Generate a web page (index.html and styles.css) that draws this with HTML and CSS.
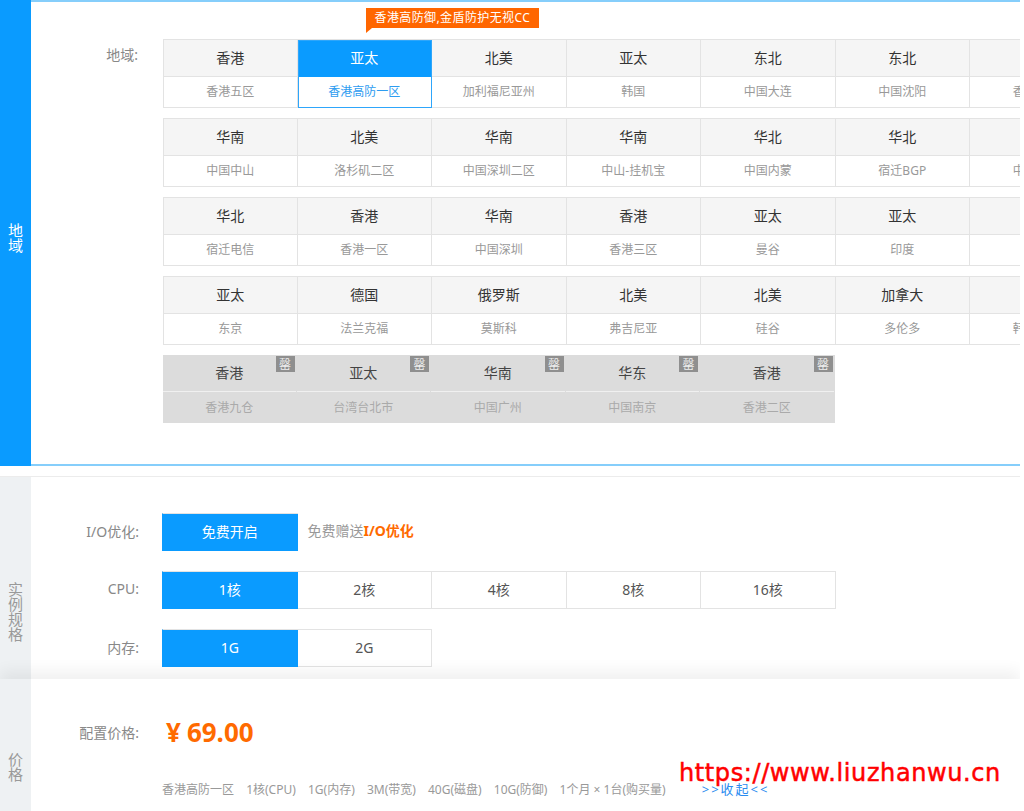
FILE: index.html
```html
<!DOCTYPE html>
<html lang="zh-CN">
  <head>
    <meta charset="UTF-8" />
    <meta name="viewport" content="width=device-width, initial-scale=1.0" />
    <title>云服务器购买</title>
    <link rel="stylesheet" href="styles.css">
  </head>

  <body>
    <div class="page">
      <!-- 地域 -->
      <section class="block region">
        <div class="side"><span>地域</span></div>
        <div class="main">
          <div class="field">
            <div class="lbl">地域:</div>
            <div class="groups">
              <div class="grp">
                <div class="cell"><div class="hd">香港</div><div class="bd">香港五区</div></div>
                <div class="cell on">
                  <div class="hd">亚太</div><div class="bd">香港高防一区</div>
                  <div class="tip">香港高防御,金盾防护无视CC</div>
                </div>
                <div class="cell"><div class="hd">北美</div><div class="bd">加利福尼亚州</div></div>
                <div class="cell"><div class="hd">亚太</div><div class="bd">韩国</div></div>
                <div class="cell"><div class="hd">东北</div><div class="bd">中国大连</div></div>
                <div class="cell"><div class="hd">东北</div><div class="bd">中国沈阳</div></div>
                <div class="cell"><div class="hd">香港</div><div class="bd">香港四区</div></div>
              </div>
              <div class="grp">
                <div class="cell"><div class="hd">华南</div><div class="bd">中国中山</div></div>
                <div class="cell"><div class="hd">北美</div><div class="bd">洛杉矶二区</div></div>
                <div class="cell"><div class="hd">华南</div><div class="bd">中国深圳二区</div></div>
                <div class="cell"><div class="hd">华南</div><div class="bd">中山-挂机宝</div></div>
                <div class="cell"><div class="hd">华北</div><div class="bd">中国内蒙</div></div>
                <div class="cell"><div class="hd">华北</div><div class="bd">宿迁BGP</div></div>
                <div class="cell"><div class="hd">华南</div><div class="bd">中国广州</div></div>
              </div>
              <div class="grp">
                <div class="cell"><div class="hd">华北</div><div class="bd">宿迁电信</div></div>
                <div class="cell"><div class="hd">香港</div><div class="bd">香港一区</div></div>
                <div class="cell"><div class="hd">华南</div><div class="bd">中国深圳</div></div>
                <div class="cell"><div class="hd">香港</div><div class="bd">香港三区</div></div>
                <div class="cell"><div class="hd">亚太</div><div class="bd">曼谷</div></div>
                <div class="cell"><div class="hd">亚太</div><div class="bd">印度</div></div>
                <div class="cell"><div class="hd">亚太</div><div class="bd">首尔</div></div>
              </div>
              <div class="grp">
                <div class="cell"><div class="hd">亚太</div><div class="bd">东京</div></div>
                <div class="cell"><div class="hd">德国</div><div class="bd">法兰克福</div></div>
                <div class="cell"><div class="hd">俄罗斯</div><div class="bd">莫斯科</div></div>
                <div class="cell"><div class="hd">北美</div><div class="bd">弗吉尼亚</div></div>
                <div class="cell"><div class="hd">北美</div><div class="bd">硅谷</div></div>
                <div class="cell"><div class="hd">加拿大</div><div class="bd">多伦多</div></div>
                <div class="cell"><div class="hd">亚太</div><div class="bd">韩国二区</div></div>
              </div>
              <div class="grp off">
                <div class="cell"><div class="hd">香港</div><div class="bd">香港九仓</div><i class="sold">罄</i></div>
                <div class="cell"><div class="hd">亚太</div><div class="bd">台湾台北市</div><i class="sold">罄</i></div>
                <div class="cell"><div class="hd">华南</div><div class="bd">中国广州</div><i class="sold">罄</i></div>
                <div class="cell"><div class="hd">华东</div><div class="bd">中国南京</div><i class="sold">罄</i></div>
                <div class="cell"><div class="hd">香港</div><div class="bd">香港二区</div><i class="sold">罄</i></div>
              </div>
            </div>
          </div>
        </div>
      </section>

      <!-- 实例规格 -->
      <section class="block spec">
        <div class="side grey"><span>实例规格</span></div>
        <div class="main">
          <div class="field mid">
            <div class="lbl">I/O优化:</div>
            <div class="opts"><div class="opt on">免费开启</div></div>
            <div class="note">免费赠送<b>I/O优化</b></div>
          </div>
          <div class="field mid">
            <div class="lbl">CPU:</div>
            <div class="opts">
              <div class="opt on">1核</div>
              <div class="opt">2核</div>
              <div class="opt">4核</div>
              <div class="opt">8核</div>
              <div class="opt">16核</div>
            </div>
          </div>
          <div class="field mid">
            <div class="lbl">内存:</div>
            <div class="opts">
              <div class="opt on">1G</div>
              <div class="opt">2G</div>
            </div>
          </div>
        </div>
      </section>

      <!-- 价格 -->
      <section class="block price">
        <div class="side grey"><span>价格</span></div>
        <div class="main">
          <div class="field mid">
            <div class="lbl">配置价格:</div>
            <div class="amount"><span class="yen">¥</span>69.00</div>
          </div>
          <div class="summary">
            <span>香港高防一区</span>
            <span>1核(CPU)</span>
            <span>1G(内存)</span>
            <span>3M(带宽)</span>
            <span>40G(磁盘)</span>
            <span>10G(防御)</span>
            <span>1个月 × 1台(购买量)</span>
            <a class="fold">&gt;&gt;收起&lt;&lt;</a>
          </div>
        </div>
        <div class="mark">https://www.liuzhanwu.cn</div>
      </section>
    </div>
  </body>
</html>
```

FILE: styles.css
```css
html,
body {
  padding: 0;
  margin: 0;
  background: #fff;
}
body {
  font-family: "Noto Sans", "Noto Sans CJK SC", sans-serif;
  color: #333;
  overflow: hidden;
}
.page {
  width: 1020px;
  height: 811px;
  overflow: hidden;
}
.block {
  display: flex;
  position: relative;
}
.side {
  width: 31px;
  flex: none;
  background: #0a9bff;
  color: #fff;
  span {
    display: block;
    width: 15px;
    margin: 0 auto;
    font-family: "Noto Sans CJK SC", sans-serif;
    font-size: 15px;
    line-height: 15px;
  }
}
.side.grey {
  background: #eef1f3;
  color: #999;
}
.main {
  flex: 1;
  min-width: 0;
}
.field {
  display: flex;
  align-items: flex-start;
}
.field.mid {
  align-items: center;
}
.lbl {
  width: 108px;
  margin-right: 23px;
  text-align: right;
  font-size: 14px;
  color: #888;
  flex: none;
}

/* 地域 */
.region {
  height: 466px;
  .side span {
    padding-top: 222px;
  }
  .main {
    box-sizing: border-box;
    border-top: 2px solid #86cefb;
    border-bottom: 2px solid #86cefb;
    padding-top: 37px;
  }
  .lbl {
    padding-top: 6px;
    line-height: 20px;
    width: 107px;
    margin-right: 25px;
  }
}
.groups {
  display: flex;
  flex-direction: column;
  gap: 10px;
}
.grp {
  display: grid;
  grid-template-columns: 133.5px repeat(6, 134.5px);
  width: max-content;
  border-top: 1px solid #e3e3e3;
  border-left: 1px solid #e3e3e3;
}
.cell {
  position: relative;
  box-sizing: border-box;
  border-right: 1px solid #e3e3e3;
  border-bottom: 1px solid #e3e3e3;
  text-align: center;
  white-space: nowrap;
  .hd {
    height: 36px;
    line-height: 36px;
    background: #f5f5f5;
    border-bottom: 1px solid #e3e3e3;
    font-size: 14px;
    color: #333;
  }
  .bd {
    height: 30px;
    line-height: 30px;
    font-size: 12px;
    color: #999;
  }
}
.cell.on {
  outline: 1px solid #2ea6fb;
  outline-offset: -1px;
  z-index: 1;
  .hd {
    background: #0a9bff;
    color: #fff;
    border-bottom-color: #0a9bff;
  }
  .bd {
    color: #2d9cf0;
  }
}
.tip {
  position: absolute;
  top: -32px;
  left: 68px;
  height: 20px;
  line-height: 20px;
  padding: 0 9px;
  background: #ff6600;
  color: #fff;
  font-size: 12px;
  letter-spacing: 0.4px;
  &::after {
    content: "";
    position: absolute;
    left: 0;
    bottom: -5px;
    border-left: 6px solid #ff6600;
    border-bottom: 5px solid transparent;
  }
}
.grp.off {
  grid-template-columns: 133.5px repeat(4, 134.5px);
  border: none;
  background: #dcdcdc;
  .cell {
    border-right: 1px solid #dcdcdc;
    border-bottom: none;
  }
  .hd {
    background: #dcdcdc;
    border-bottom: 1px solid #f0f0f0;
    color: #444;
  }
  .bd {
    height: 31px;
    line-height: 31px;
    color: #aaa;
  }
}
.sold {
  position: absolute;
  top: 1px;
  right: 1px;
  width: 19px;
  height: 16px;
  line-height: 16px;
  background: #8f8f8f;
  color: #eee;
  font-style: normal;
  font-family: "Noto Sans CJK SC", sans-serif;
  font-size: 12px;
  text-align: center;
}

/* 实例规格 */
.spec {
  margin-top: 10px;
  height: 202px;
  border-top: 1px solid #ececec;
  .side span {
    padding-top: 104px;
  }
  .main {
    padding-top: 36px;
    display: flex;
    flex-direction: column;
    gap: 20px;
  }
  .lbl {
    margin-top: -3px;
  }
}
.opts {
  display: flex;
  border-top: 1px solid #e3e3e3;
  border-left: 1px solid #e3e3e3;
}
.opt {
  box-sizing: border-box;
  width: 134.5px;
  height: 37px;
  line-height: 36px;
  border-right: 1px solid #e3e3e3;
  border-bottom: 1px solid #e3e3e3;
  text-align: center;
  font-size: 14px;
  color: #555;
}
.opt.on {
  background: #0a9bff;
  border-color: #0a9bff;
  color: #fff;
}
.opts:has(.opt.on:first-child) {
  border-left-color: #0a9bff;
}
.note {
  margin-left: 10px;
  font-size: 14px;
  color: #999;
  margin-top: -4px;
  b {
    color: #ff6a00;
  }
}

/* 价格 */
.price {
  height: 133px;
  box-shadow: 0 -8px 14px rgba(0, 0, 0, 0.06);
  z-index: 2;
  background: #fff;
  .side span {
    padding-top: 72px;
  }
  .main {
    padding-top: 36px;
  }
  .lbl {
    margin-right: 27px;
  }
}
.amount {
  font-size: 26px;
  font-weight: 700;
  line-height: 34px;
  color: #ff6a00;
  .yen {
    margin-right: 6px;
  }
}
.summary {
  margin: 30px 0 0 131px;
  font-size: 12px;
  color: #999;
  white-space: nowrap;
  span {
    margin-right: 9px;
  }
  .fold {
    margin-left: 24px;
    font-size: 13px;
    letter-spacing: 2px;
    color: #2a8cf0;
  }
}
.mark {
  position: absolute;
  left: 679px;
  top: 80px;
  font-family: "DejaVu Sans", sans-serif;
  font-size: 24px;
  line-height: 28px;
  color: #ff0000;
  letter-spacing: 0.6px;
  -webkit-text-stroke: 0.5px #ff0000;
}
```
